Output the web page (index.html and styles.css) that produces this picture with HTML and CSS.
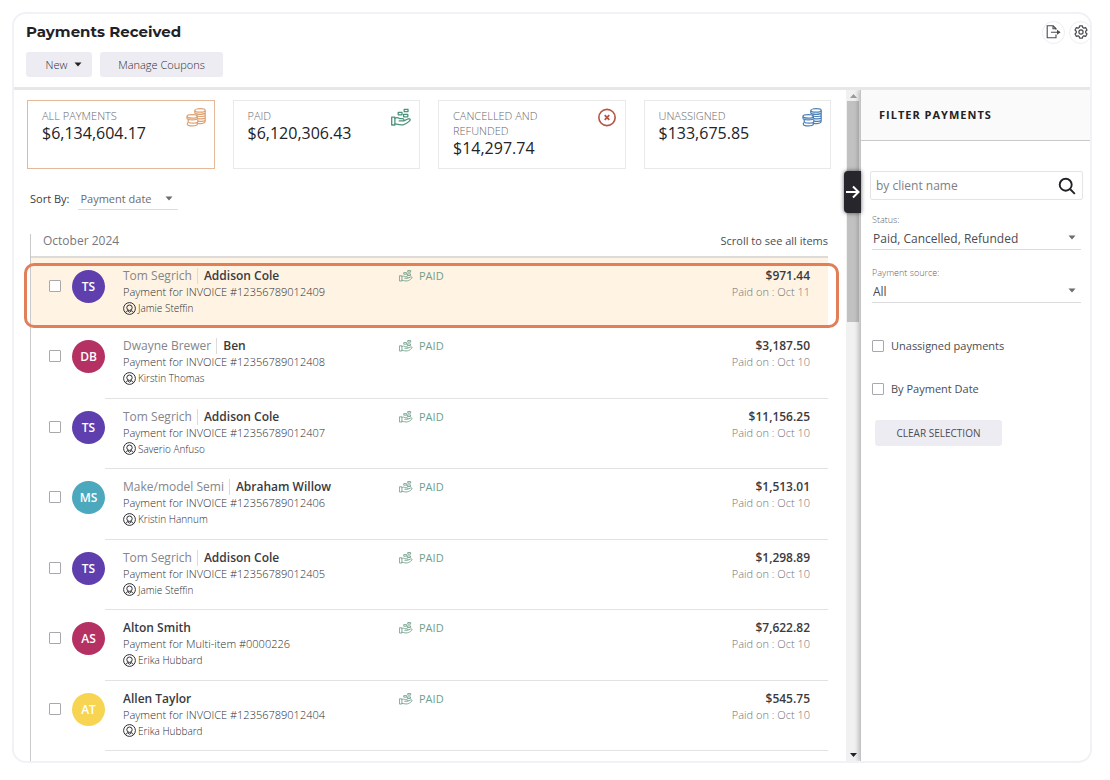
FILE: index.html
```html
<!DOCTYPE html>
<html lang="en">
<head>
<meta charset="utf-8">
<meta name="viewport" content="width=device-width, initial-scale=1">
<title>Payments Received</title>
<link rel="stylesheet" href="styles.css">
</head>
<body>
<svg class="sprite" aria-hidden="true">
  <symbol id="coins" viewBox="0 0 20 19">
    <g fill="none" stroke="currentColor" stroke-width="1.2">
      <ellipse cx="14" cy="2.4" rx="5.2" ry="1.7"/>
      <path d="M8.800 2.400v3M19.200 2.400v11.200M8.800 4.900c1 1.900 9.400 1.900 10.400 0M9.800 7.800c2 1 8.400 1 9.400-.3M12 10.600c3 .4 6.200.2 7.200-.6M12 13.100c3 .4 6.200.2 7.200-.6M12 15.400c3.400.4 6.600-.2 7.200-1.800"/>
      <ellipse cx="6.200" cy="8.400" rx="5.200" ry="1.700"/>
      <path d="M1 8.400v1.800c0 2.200 10.400 2.200 10.400 0V8.400M2.200 11.900v1.600c0 2.200 9.600 2.200 9.600 0v-2M1.400 14.400v1.800c0 2.300 10 2.300 10 0v-1.600"/>
    </g>
  </symbol>
  <symbol id="hand" viewBox="0 0 20 18">
    <g fill="none" stroke="currentColor" stroke-width="1.300" stroke-linejoin="round" stroke-linecap="round">
      <path d="M.7 8.700h3.200v7.800H.7z"/>
      <path d="M3.900 9.800c1.600-1 3.200-.8 4.600.3h3c1.700 0 1.900 2.200.2 2.300H8.200M12.800 12.300l4-1.800c1.900-.8 3.100.6 1.800 1.900-2 2-4 3.400-6.600 3.900-2.700.4-5-.3-8.100-.9"/>
      <path d="M13.200.8H17v2.400h-3.800zM7.200 3.900H11v2.400H7.200zM12.600 5.900h4.200v2.400h-4.200z"/>
    </g>
  </symbol>
  <symbol id="person" viewBox="0 0 13 13">
    <g fill="none" stroke="currentColor" stroke-width="1">
      <circle cx="6.500" cy="6.500" r="5.900"/>
      <circle cx="6.500" cy="5.700" r="2.700"/>
      <path d="M2.600 10.800c.4-1.400 1.300-1.900 2.600-2.300v.8l1.300.9 1.300-.9v-.8c1.300.4 2.200.9 2.600 2.300"/>
    </g>
  </symbol>
  <symbol id="caret" viewBox="0 0 8 5"><path d="M.5.5h7L4 4.500z" fill="currentColor"/></symbol>
</svg>

<div class="frame">
  <header class="top">
    <div class="top-row">
      <h1>Payments Received</h1>
      <div class="tools">
        <button class="round" type="button" aria-label="Export">
          <svg width="15" height="14" viewBox="0 0 15 14" fill="none" stroke="currentColor" stroke-width="1.100"><path d="M10 4.800V3.600L7.200.8H1.200v12H10V9.500M7 .8v3h3M5 7.200h8.500"/><path d="M11 4.700l3.600 2.500L11 9.700z" fill="currentColor" stroke="none"/></svg>
        </button>
        <button class="round" type="button" aria-label="Settings">
          <svg width="14" height="14" viewBox="0 0 14 14" fill="none" stroke="currentColor" stroke-width="1.200" stroke-linejoin="round"><path d="M5.600.8h2.800l.4 1.700 1.100.6 1.700-.5L13 5l-1.300 1.200v1.600L13 9l-1.400 2.400-1.700-.5-1.100.6-.4 1.700H5.600l-.4-1.700-1.100-.6-1.700.5L1 9l1.300-1.200V6.200L1 5l1.400-2.400 1.700.5 1.100-.6z"/><circle cx="7" cy="7" r="2.100"/></svg>
        </button>
      </div>
    </div>
    <div class="actions">
      <button class="btn btn-new" type="button">New <svg class="caret" width="8" height="5"><use href="#caret"/></svg></button>
      <button class="btn btn-coupons" type="button">Manage Coupons</button>
    </div>
  </header>

  <div class="content">
    <main class="main">
      <section class="cards">
        <article class="card card-active">
          <div><h2>ALL PAYMENTS</h2><p>$6,134,604.17</p></div>
          <svg class="card-icon orange"><use href="#coins"/></svg>
        </article>
        <article class="card">
          <div><h2>PAID</h2><p>$6,120,306.43</p></div>
          <svg class="card-icon green"><use href="#hand"/></svg>
        </article>
        <article class="card">
          <div><h2>CANCELLED AND REFUNDED</h2><p>$14,297.74</p></div>
          <svg class="card-icon red" viewBox="0 0 20 20" fill="none" stroke="currentColor"><circle cx="10" cy="10" r="8.600" stroke-width="1.700"/><path d="M7.600 7.600l4.800 4.800M12.400 7.600l-4.800 4.800" stroke-width="1.900"/></svg>
        </article>
        <article class="card">
          <div><h2>UNASSIGNED</h2><p>$133,675.85</p></div>
          <svg class="card-icon blue"><use href="#coins"/></svg>
        </article>
      </section>

      <div class="sort">
        <label for="sort">Sort By:</label>
        <div class="select select-sort">
          <select id="sort"><option>Payment date</option></select>
          <svg class="caret" width="8" height="5"><use href="#caret"/></svg>
        </div>
      </div>

      <section class="list">
        <div class="list-head"><h3>October 2024</h3><span>Scroll to see all items</span></div>
        <ul class="rows">
          <li class="row row-selected">
            <input type="checkbox" aria-label="Select payment 12356789012409">
            <span class="avatar purple">TS</span>
            <div class="row-body">
              <div class="who"><div class="names"><span class="client">Tom Segrich</span><strong>Addison Cole</strong></div><div class="desc">Payment for INVOICE #12356789012409</div><div class="staff"><svg><use href="#person"/></svg>Jamie Steffin</div></div>
              <div class="status"><svg><use href="#hand"/></svg>PAID</div>
              <div class="sum"><strong>$971.44</strong><span>Paid on : Oct 11</span></div>
            </div>
          </li>
          <li class="row">
            <input type="checkbox" aria-label="Select payment 12356789012408">
            <span class="avatar crimson">DB</span>
            <div class="row-body">
              <div class="who"><div class="names"><span class="client">Dwayne Brewer</span><strong>Ben</strong></div><div class="desc">Payment for INVOICE #12356789012408</div><div class="staff"><svg><use href="#person"/></svg>Kirstin Thomas</div></div>
              <div class="status"><svg><use href="#hand"/></svg>PAID</div>
              <div class="sum"><strong>$3,187.50</strong><span>Paid on : Oct 10</span></div>
            </div>
          </li>
          <li class="row">
            <input type="checkbox" aria-label="Select payment 12356789012407">
            <span class="avatar purple">TS</span>
            <div class="row-body">
              <div class="who"><div class="names"><span class="client">Tom Segrich</span><strong>Addison Cole</strong></div><div class="desc">Payment for INVOICE #12356789012407</div><div class="staff"><svg><use href="#person"/></svg>Saverio Anfuso</div></div>
              <div class="status"><svg><use href="#hand"/></svg>PAID</div>
              <div class="sum"><strong>$11,156.25</strong><span>Paid on : Oct 10</span></div>
            </div>
          </li>
          <li class="row">
            <input type="checkbox" aria-label="Select payment 12356789012406">
            <span class="avatar teal">MS</span>
            <div class="row-body">
              <div class="who"><div class="names"><span class="client">Make/model Semi</span><strong>Abraham Willow</strong></div><div class="desc">Payment for INVOICE #12356789012406</div><div class="staff"><svg><use href="#person"/></svg>Kristin Hannum</div></div>
              <div class="status"><svg><use href="#hand"/></svg>PAID</div>
              <div class="sum"><strong>$1,513.01</strong><span>Paid on : Oct 10</span></div>
            </div>
          </li>
          <li class="row">
            <input type="checkbox" aria-label="Select payment 12356789012405">
            <span class="avatar purple">TS</span>
            <div class="row-body">
              <div class="who"><div class="names"><span class="client">Tom Segrich</span><strong>Addison Cole</strong></div><div class="desc">Payment for INVOICE #12356789012405</div><div class="staff"><svg><use href="#person"/></svg>Jamie Steffin</div></div>
              <div class="status"><svg><use href="#hand"/></svg>PAID</div>
              <div class="sum"><strong>$1,298.89</strong><span>Paid on : Oct 10</span></div>
            </div>
          </li>
          <li class="row">
            <input type="checkbox" aria-label="Select payment 0000226">
            <span class="avatar crimson">AS</span>
            <div class="row-body">
              <div class="who"><div class="names"><strong>Alton Smith</strong></div><div class="desc">Payment for Multi-item #0000226</div><div class="staff"><svg><use href="#person"/></svg>Erika Hubbard</div></div>
              <div class="status"><svg><use href="#hand"/></svg>PAID</div>
              <div class="sum"><strong>$7,622.82</strong><span>Paid on : Oct 10</span></div>
            </div>
          </li>
          <li class="row">
            <input type="checkbox" aria-label="Select payment 12356789012404">
            <span class="avatar yellow">AT</span>
            <div class="row-body">
              <div class="who"><div class="names"><strong>Allen Taylor</strong></div><div class="desc">Payment for INVOICE #12356789012404</div><div class="staff"><svg><use href="#person"/></svg>Erika Hubbard</div></div>
              <div class="status"><svg><use href="#hand"/></svg>PAID</div>
              <div class="sum"><strong>$545.75</strong><span>Paid on : Oct 10</span></div>
            </div>
          </li>
        </ul>
      </section>
    </main>

    <div class="scrollbar" aria-hidden="true">
      <svg class="up" width="7" height="4" viewBox="0 0 7 4"><path d="M3.500 0L7 4H0z" fill="currentColor"/></svg>
      <div class="track"><div class="thumb"></div></div>
      <svg class="down" width="7" height="4" viewBox="0 0 7 4"><path d="M0 0h7L3.500 4z" fill="currentColor"/></svg>
    </div>

    <aside class="filter">
      <button class="collapse" type="button" aria-label="Hide filters">
        <svg width="14" height="14" viewBox="0 0 14 14" fill="none" stroke="currentColor" stroke-width="2"><path d="M0 7h12.500M7 1.500L12.500 7 7 12.500"/></svg>
      </button>
      <h2 class="filter-title">FILTER PAYMENTS</h2>
      <form class="filter-body">
        <div class="search">
          <input type="text" placeholder="by client name" aria-label="Client name">
          <button type="button" aria-label="Search"><svg width="18" height="18" viewBox="0 0 18 18" fill="none" stroke="currentColor" stroke-width="1.900"><circle cx="7.700" cy="7.700" r="6"/><path d="M12 12l4.800 4.800"/></svg></button>
        </div>
        <div class="field">
          <label for="status">Status:</label>
          <div class="select"><select id="status"><option>Paid, Cancelled, Refunded</option></select><svg class="caret" width="8" height="5"><use href="#caret"/></svg></div>
        </div>
        <div class="field">
          <label for="source">Payment source:</label>
          <div class="select"><select id="source"><option>All</option></select><svg class="caret" width="8" height="5"><use href="#caret"/></svg></div>
        </div>
        <div class="checks">
          <label><input type="checkbox">Unassigned payments</label>
          <label><input type="checkbox">By Payment Date</label>
        </div>
        <button class="btn btn-clear" type="reset">CLEAR SELECTION</button>
      </form>
    </aside>
  </div>
</div>
</body>
</html>
```

FILE: styles.css
```css
* { box-sizing: border-box; margin: 0; padding: 0; }

body {
  min-height: 100vh;
  display: flex;
  padding: 12px 18px 17px 12px;
  background: #fff;
  color: #4c4c52;
  font: 11px/16px "Open Sans", "Noto Sans", sans-serif;
}

button, input, select { font: inherit; color: inherit; }
button { cursor: pointer; border: 0; background: none; }
svg { display: block; flex: none; }
.sprite { position: absolute; width: 0; height: 0; }

.frame {
  flex: 1;
  min-width: 0;
  display: flex;
  flex-direction: column;
  border: 2px solid #f2f1f5;
  border-radius: 14px;
  overflow: hidden;
}

/* Header */
.top { padding: 7px 0 10px 12px; border-bottom: 3px solid #e7e6e9; }
.top-row { display: flex; align-items: center; justify-content: space-between; height: 22px; }
h1 { font: 700 15px/22px Montserrat, "Open Sans", sans-serif; color: #222226; }
.tools { display: flex; gap: 4px; margin-right: -2px; }
.round {
  width: 23px;
  height: 23px;
  display: grid;
  place-items: center;
  border: 1px solid #ededf0;
  border-radius: 50%;
  color: #4a4a50;
}
.actions { display: flex; gap: 8px; margin-top: 9px; }
.btn {
  height: 25px;
  display: flex;
  align-items: center;
  justify-content: center;
  border-radius: 3px;
  background: #edecf2;
  font-weight: 300;
  line-height: 15px;
  color: #2e2e34;
}
.btn-new { width: 66px; gap: 7px; padding-left: 10px; }
.btn-new .caret { color: #222; }
.btn-coupons { width: 123px; }

/* Content columns */
.content { flex: 1; display: flex; }
.main { flex: 1; min-width: 0; display: flex; flex-direction: column; padding: 10px 15px 0 13px; }

.cards { display: grid; grid-template-columns: repeat(4, 1fr); gap: 18px; }
.card {
  min-height: 69px;
  display: flex;
  justify-content: space-between;
  align-items: flex-start;
  padding: 7px 8px 7px 14px;
  border: 1px solid #e9e9eb;
}
.card-active { border-color: #e3b999; }
.card h2 { max-width: 100px; font-size: 11px; line-height: 15px; font-weight: 300; color: #68686e; }
.card p { font-size: 16px; line-height: 21px; color: #222228; }
.card-icon { width: 20px; height: 19px; }
.orange { color: #dda071; }
.green { color: #4c9479; }
.red { color: #b65445; }
.blue { color: #4a7fb5; }

.sort { display: flex; align-items: center; gap: 9px; margin: 19px 0 24px 3px; }
.sort label { color: #3c3c42; }
.select { position: relative; display: flex; align-items: center; border-bottom: 1px solid #dcdcde; }
.select select {
  width: 100%;
  appearance: none;
  border: 0;
  background: none;
  outline-offset: 1px;
}
.select .caret { position: absolute; right: 5px; color: #6b6b6f; pointer-events: none; }
.select-sort { width: 100px; height: 22px; color: #6b6b70; }
.select-sort select { padding-left: 2px; }

/* Payment list */
.list {
  flex: 1;
  display: flex;
  flex-direction: column;
  margin: 0 3px;
  padding-bottom: 10px;
  border-left: 1px solid #c9c9cb;
}
.list-head {
  display: flex;
  justify-content: space-between;
  align-items: center;
  height: 24px;
  padding: 0 0 8px 12px;
  border-bottom: 2px solid #dcdadb;
}
.list-head h3 { font-size: 12px; font-weight: 400; color: #77777c; }
.rows { flex: 1; display: flex; flex-direction: column; list-style: none; }
.row { position: relative; flex: 1 0 70px; display: flex; align-items: flex-start; padding-left: 18px; }
.row-selected { background: #fff4e3; }
.row-selected::after {
  content: "";
  position: absolute;
  inset: 5px -11px 0 -7px;
  border: 3px solid #e27f58;
  border-radius: 10px;
  pointer-events: none;
}
input[type="checkbox"] {
  flex: none;
  width: 12px;
  height: 12px;
  appearance: none;
  border: 1px solid #a9a9ad;
  border-radius: 1px;
  background: #fff;
}
input[type="checkbox"]:checked { background: #5e3fae; }
.row input { margin-top: 22px; }
.avatar {
  flex: none;
  width: 33px;
  height: 33px;
  margin: 12px 0 0 11px;
  border-radius: 50%;
  color: #fff;
  font-size: 12px;
  font-weight: 600;
  line-height: 33px;
  text-align: center;
}
.purple { background: #5f3fae; }
.crimson { background: #b53163; }
.teal { background: #4ba8bd; }
.yellow { background: #f7d552; }

.row-body {
  flex: 1;
  align-self: stretch;
  display: grid;
  grid-template-columns: 276px 1fr auto;
  align-items: start;
  padding: 10px 18px 0;
  border-bottom: 1px solid #e2e2e4;
}
.row-selected .row-body { border-color: transparent; }
.names { display: flex; font-size: 12px; line-height: 16px; }
.names strong, .sum strong { font-size: 12px; font-weight: 600; color: #3a3a40; }
.client { margin-right: 6px; padding-right: 5px; border-right: 1px solid #dcdcde; color: #85858a; }
.desc { font-weight: 300; color: #2e2e34; }
.staff { display: flex; align-items: center; gap: 2px; font-size: 10px; font-weight: 300; color: #2e2e34; }
.staff svg { width: 13px; height: 13px; }
.status { display: flex; align-items: center; gap: 6px; color: #6f9f8a; }
.status svg { width: 14px; height: 12px; }
.sum { display: flex; flex-direction: column; align-items: flex-end; }
.sum span { font-weight: 300; color: #717177; }

/* Scroll strip */
.scrollbar { width: 14px; display: flex; flex-direction: column; align-items: center; padding: 4px 1px; background: #f1f1f1; }
.up { color: #9a9a9a; }
.down { color: #222; }
.track { flex: 1; align-self: stretch; padding: 3px 0; }
.thumb { height: 34%; background: #c1c1c1; }

/* Filter panel */
.filter { position: relative; width: 230px; border-left: 1px solid #c4c4c6; background: #fff; box-shadow: -2px 0 4px rgba(0, 0, 0, .2); clip-path: inset(0 0 0 -24px); }
.collapse {
  position: absolute;
  top: 81px;
  left: -17px;
  width: 17px;
  height: 42px;
  display: grid;
  place-items: center;
  border-radius: 4px 0 0 4px;
  background: #27262d;
  box-shadow: 0 0 4px rgba(0, 0, 0, .6);
  color: #fff;
}
.filter-title {
  height: 51px;
  padding-left: 18px;
  border-bottom: 1px solid #c9c9cb;
  background: #fafafa;
  font-size: 11px;
  font-weight: 700;
  line-height: 49px;
  letter-spacing: 1px;
  color: #222226;
}
.filter-body { padding: 30px 7px 0 9px; }
.search { display: flex; align-items: center; height: 29px; padding: 0 6px 0 5px; border: 1px solid #e4e4e7; border-radius: 2px; }
.search input { flex: 1; min-width: 0; border: 0; outline: 0; background: none; font-size: 12px; }
.search input::placeholder { color: #7e7e83; opacity: 1; }
.search button { color: #222226; }
.field { margin: 14px 2px 0 2px; }
.field label { display: block; font-size: 9px; line-height: 12px; font-weight: 300; color: #5f5f65; }
.field .select { height: 24px; font-size: 12px; }
.field + .field { margin-top: 17px; }
.field .select select { padding: 3px 0 0 1px; }
.checks { display: flex; flex-direction: column; gap: 27px; margin: 35px 0 0 2px; }
.checks label { display: flex; align-items: center; gap: 7px; font-size: 11px; }
.btn-clear { width: 127px; height: 26px; margin: 23px 0 0 5px; font-size: 10px; font-weight: 400; color: #4c4c52; }
```
